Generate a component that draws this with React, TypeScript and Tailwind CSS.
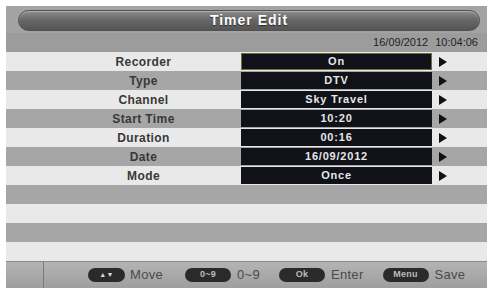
import type { JSX } from "react";

type Field = { label: string; value: string };

const fields: Field[] = [
  { label: "Recorder", value: "On" },
  { label: "Type", value: "DTV" },
  { label: "Channel", value: "Sky Travel" },
  { label: "Start Time", value: "10:20" },
  { label: "Duration", value: "00:16" },
  { label: "Date", value: "16/09/2012" },
  { label: "Mode", value: "Once" },
];

function Arrow(): JSX.Element {
  return (
    <svg width="8" height="10" viewBox="0 0 8 10" className="ml-[7px]">
      <path d="M0 0 L8 5 L0 10 Z" fill="#111" />
    </svg>
  );
}

function Key({ label }: { label: string }): JSX.Element {
  return (
    <span className="flex h-[14px] w-[46px] items-center justify-center rounded-full bg-[#2a2a2a] text-[9px] font-bold text-[#bdbdbd]">
      {label}
    </span>
  );
}

export default function App(): JSX.Element {
  const rows = Array.from({ length: 11 }, (_, i) => i);

  return (
    <div className="h-[290px] w-[490px] bg-white pl-[6px] pt-[6px] font-['Liberation_Sans',Arial,sans-serif]">
      <div className="flex h-[282px] w-[481px] flex-col bg-[#a3a3a3]">
        {/* title */}
        <div className="flex h-[27px] items-start pl-[12px] pr-[7px] pt-[4px]">
          <div className="flex h-[21px] flex-1 items-center justify-center rounded-full border border-[#505050] bg-gradient-to-b from-[#8c8c8c] via-[#666] to-[#555] shadow-[inset_0_1px_1px_rgba(255,255,255,0.35)]">
            <span className="text-[14px] font-bold tracking-[1px] text-white [text-shadow:0_1px_1px_rgba(0,0,0,0.6)]">
              Timer Edit
            </span>
          </div>
        </div>

        {/* date */}
        <div className="flex h-[19px] items-center justify-end bg-[#9c9c9c] pr-[9px] text-[11px] text-[#1f1f1f]">
          <span>16/09/2012</span>
          <span className="ml-[7px]">10:04:06</span>
        </div>

        {/* rows */}
        <div className="flex flex-col">
          {rows.map((i) => {
            const f = fields[i];
            const light = i % 2 === 0;
            return (
              <div
                key={i}
                className={`flex h-[19px] items-center ${light ? "bg-[#e9e9e9]" : "bg-[#a6a6a6]"}`}
              >
                {f && (
                  <>
                    <div className="w-[235px] pl-[40px] text-center text-[12px] font-bold tracking-[0.4px] text-[#383838]">
                      {f.label}
                    </div>
                    <div
                      className={`flex h-[17px] w-[191px] items-center justify-center bg-[#101119] text-[11px] font-bold tracking-[0.8px] text-[#e6e6e6] ${
                        i === 0 ? "border border-[#6f6f3c]" : ""
                      }`}
                    >
                      {f.value}
                    </div>
                    <Arrow />
                  </>
                )}
              </div>
            );
          })}
        </div>

        {/* footer */}
        <div className="flex flex-1 items-center border-t border-[#8a8a8a] bg-gradient-to-b from-[#b4b4b4] to-[#9e9e9e] text-[13px] tracking-[0.3px] text-[#4a4a4a]">
          <div className="h-full w-[38px] border-r border-[#7a7a7a]" />
          <div className="ml-[44px] flex items-center">
            <span className="flex h-[14px] w-[37px] items-center justify-center rounded-full bg-[#2a2a2a] text-[7px] text-[#d8d8d8]">
              ▲▼
            </span>
            <span className="ml-[5px]">Move</span>
          </div>
          <div className="ml-[22px] flex items-center">
            <Key label="0~9" />
            <span className="ml-[6px]">0~9</span>
          </div>
          <div className="ml-[19px] flex items-center">
            <Key label="Ok" />
            <span className="ml-[6px]">Enter</span>
          </div>
          <div className="ml-[19px] flex items-center">
            <Key label="Menu" />
            <span className="ml-[6px]">Save</span>
          </div>
        </div>
      </div>
    </div>
  );
}
